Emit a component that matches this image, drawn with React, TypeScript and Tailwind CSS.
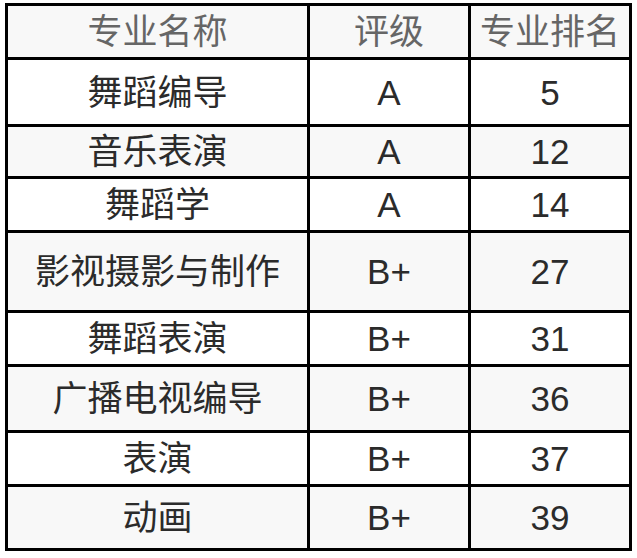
import React from "react";

const rows: [string, string, string][] = [
  ["舞蹈编导", "A", "5"],
  ["音乐表演", "A", "12"],
  ["舞蹈学", "A", "14"],
  ["影视摄影与制作", "B+", "27"],
  ["舞蹈表演", "B+", "31"],
  ["广播电视编导", "B+", "36"],
  ["表演", "B+", "37"],
  ["动画", "B+", "39"],
];

export default function App() {
  return (
    <div
      className="w-[637px] h-[558px] bg-white pl-[5px] pt-[3px]"
      style={{ fontFamily: '"Liberation Sans", "Noto Sans CJK SC", sans-serif' }}
    >
      <div className="grid w-[627px] grid-cols-[299px_158px_158px] grid-rows-[51px_64px_49px_51px_77px_51px_63px_51px_61px] gap-[3px] bg-black p-[3px] text-[35px] leading-none">
        {["专业名称", "评级", "专业排名"].map((h) => (
          <div key={h} className="flex items-center justify-center bg-[#f8f8f8] text-[#666666]">
            {h}
          </div>
        ))}
        {rows.map((r, i) =>
          r.map((c, j) => (
            <div
              key={`${i}-${j}`}
              className={`flex items-center justify-center text-[#2b2b2b] ${
                i % 2 === 0 ? "bg-white" : "bg-[#f8f8f8]"
              }`}
            >
              {c}
            </div>
          ))
        )}
      </div>
    </div>
  );
}
